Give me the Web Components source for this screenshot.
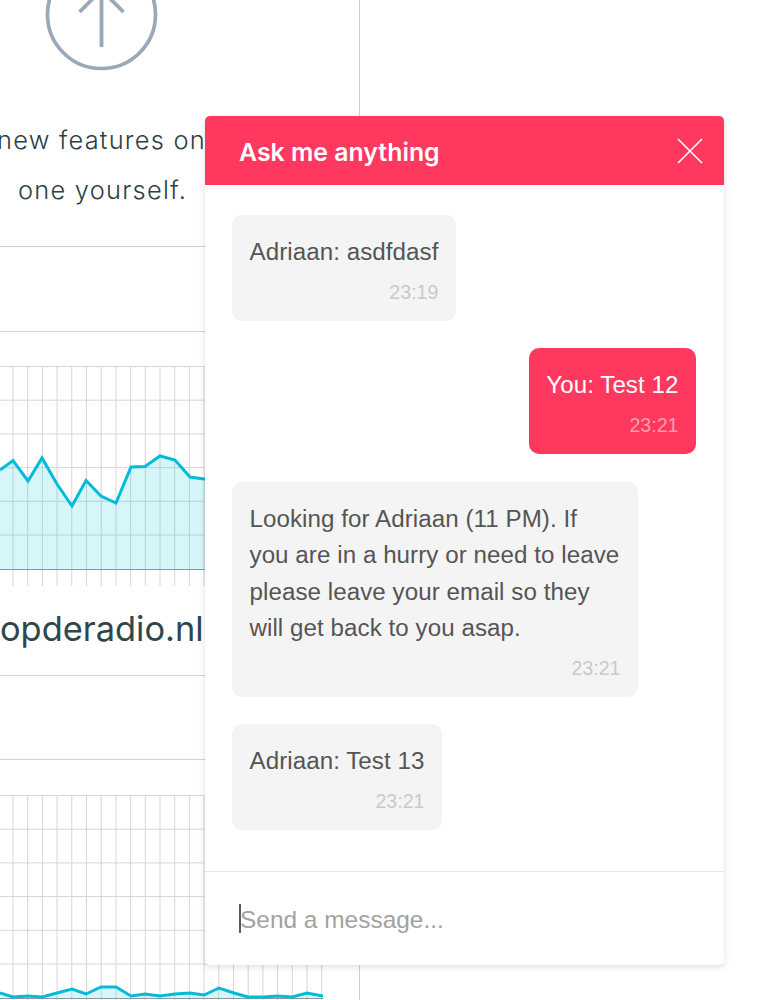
<!DOCTYPE html>
<html lang="en">
<head>
<meta charset="utf-8">
<title>Ask me anything</title>
<style>
html,body{margin:0;padding:0;background:#fff;}
body{width:759px;height:1000px;overflow:hidden;position:relative;}
</style>
</head>
<body>
<page-column>
  <upload-hero>
    <span>new features on</span>
    <span>one yourself.</span>
  </upload-hero>
  <section-rule style="margin-top:31.5px"></section-rule>
  <section-rule style="margin-top:84px"></section-rule>
  <traffic-chart style="margin-top:34px" height="220" base="203" ticks="1"
    points="0,104 13,94.5 28,115 42,92 57,118 72,140 86,114.5 101,130 116,137 131,101 145,100.5 160,90 175,94 190,111 204,113 219,113 234,120 248,118 263,110 278,120 292,115 307,118 323,116"></traffic-chart>
  <site-name>opderadio.nl</site-name>
  <section-rule style="margin-top:24px"></section-rule>
  <section-rule style="margin-top:83px"></section-rule>
  <traffic-chart style="margin-top:35px" height="205" base="203" ticks="0"
    points="0,198 13,202 28,201 42,202 57,198 72,194 86,199 101,192 116,192 131,201 145,199 160,201 175,199 190,198 204,200 219,193 234,198 248,202 263,202 278,201 292,202 307,198 323,201"></traffic-chart>
</page-column>

<chat-panel title-text="Ask me anything" placeholder="Send a message...">
  <chat-bubble time="23:19">Adriaan: asdfdasf</chat-bubble>
  <chat-bubble time="23:21" mine>You: Test 12</chat-bubble>
  <chat-bubble time="23:21">Looking for Adriaan (11 PM). If you are in a hurry or need to leave please leave your email so they will get back to you asap.</chat-bubble>
  <chat-bubble time="23:21">Adriaan: Test 13</chat-bubble>
</chat-panel>

<script>
function shadow(el, html){
  const root = el.attachShadow({mode:'open'});
  root.innerHTML = html;
  return root;
}
customElements.define('page-column', class extends HTMLElement{
  constructor(){super();shadow(this,`<style>
    :host{display:block;width:359px;height:1000px;border-right:1px solid #c5d0da;overflow:hidden;box-sizing:content-box;}
  </style><slot></slot>`);}
});
customElements.define('section-rule', class extends HTMLElement{
  constructor(){super();shadow(this,`<style>
    :host{display:block;height:1px;background:#cbd5dd;}
  </style>`);}
});
customElements.define('upload-hero', class extends HTMLElement{
  constructor(){super();shadow(this,`<style>
    :host{display:block;color:#2b4045;font:300 25.4px/50px "Inter","Lato",sans-serif;letter-spacing:1.25px;}
    svg{display:block;width:204px;height:71px;}
    .lines{margin-top:43.5px;width:205px;overflow:hidden;white-space:nowrap;}
    ::slotted(span){display:block;}
    ::slotted(span:first-child){margin-left:-3px;}
    ::slotted(span:last-child){margin-left:18px;}
  </style>
  <svg viewBox="0 0 204 71" aria-hidden="true">
    <circle cx="101.5" cy="14.5" r="54" fill="none" stroke="#9aa9b8" stroke-width="3.7"/>
    <path d="M101.5 47V-10M79.5 12L101.5-10L123.5 12" fill="none" stroke="#9aa9b8" stroke-width="3.8"/>
  </svg>
  <div class="lines"><slot></slot></div>`);}
});
customElements.define('site-name', class extends HTMLElement{
  constructor(){super();shadow(this,`<style>
    :host{display:block;width:203px;white-space:nowrap;text-align:right;color:#2e474c;font:400 34.4px/44px "Inter","Lato",sans-serif;letter-spacing:0;margin-top:21px;}
  </style><slot></slot>`);}
});
customElements.define('traffic-chart', class extends HTMLElement{
  connectedCallback(){
    if(this.shadowRoot) return;
    const h=+this.getAttribute('height'), base=+this.getAttribute('base');
    const ticks=this.getAttribute('ticks')==='1';
    const pts=this.getAttribute('points');
    let grid='';
    for(let i=0;i<22;i++){
      const x=(13+14.7*i).toFixed(1);
      grid+=`<line x1="${x}" x2="${x}" y1="0" y2="${ticks?220:h}"/>`;
    }
    for(let i=0;i<6;i++){
      const y=(0.5+33.7*i).toFixed(1);
      grid+=`<line x1="0" x2="323" y1="${y}" y2="${y}"/>`;
    }
    const endX=pts.trim().split(' ').pop().split(',')[0];
    shadow(this,`<style>
      :host{display:block;}
      svg{display:block;width:323px;height:${h}px;}
      .grid line{stroke:#d6d6d6;stroke-width:1;}
    </style>
    <svg viewBox="0 0 323 ${h}" aria-hidden="true">
      <g class="grid">${grid}</g>
      <polygon points="0,${base} ${pts} ${endX},${base}" fill="#00c8e1" fill-opacity=".16"/>
      <line x1="0" x2="323" y1="${base}.5" y2="${base}.5" stroke="#8b979f" stroke-width="1"/>
      <polyline points="${pts}" fill="none" stroke="#00bcd8" stroke-width="3"/>
    </svg>`);
  }
});
customElements.define('chat-bubble', class extends HTMLElement{
  connectedCallback(){
    if(this.shadowRoot) return;
    shadow(this,`<style>
      :host{display:block;width:fit-content;max-width:406px;box-sizing:border-box;padding:19px 17.5px 14px;border-radius:10px;background:#f4f4f4;color:#555;font:400 24.15px/36.5px "Liberation Sans",Arial,sans-serif;letter-spacing:.06px;}
      :host([mine]){align-self:flex-end;background:#fe385e;color:#fff;}
      .time{margin-top:6.5px;text-align:right;font-size:19.6px;line-height:30px;color:#c9c9c9;letter-spacing:0;}
      :host([mine]) .time{color:rgba(255,255,255,.5);}
    </style><slot></slot><div class="time">${this.getAttribute('time')}</div>`);
  }
});
customElements.define('chat-panel', class extends HTMLElement{
  connectedCallback(){
    if(this.shadowRoot) return;
    shadow(this,`<style>
      :host{position:absolute;left:205px;top:116px;width:519px;height:849px;display:flex;flex-direction:column;background:#fff;border-radius:5px;box-shadow:0 2px 7px rgba(0,0,0,.13);}
      header{flex:none;height:69px;box-sizing:border-box;padding:3px 21px 0 34px;display:flex;align-items:center;justify-content:space-between;background:#fe385e;border-radius:5px 5px 0 0;color:#fff;font:600 24.85px/1 "Inter","Lato",sans-serif;}
      header svg{display:block;width:26px;height:26px;margin-top:-3px;}
      .list{flex:1;min-height:0;padding:30px 28px 0 27px;display:flex;flex-direction:column;gap:27.3px;}
      footer{flex:none;height:94px;box-sizing:border-box;border-top:1px solid #e6e6e6;padding:0 0 0 34px;display:flex;align-items:center;color:#a2a2a2;font:400 24.45px/30px "Liberation Sans",Arial,sans-serif;}
      .caret{flex:none;width:2px;height:29px;background:#5a5a5a;margin-right:-1px;}
      .ph{margin-top:2px;}
    </style>
    <header><span>${this.getAttribute('title-text')}</span>
      <svg viewBox="0 0 26 26" aria-hidden="true"><path d="M1 1L25 25M25 1L1 25" fill="none" stroke="#fff" stroke-width="1.6"/></svg>
    </header>
    <div class="list"><slot></slot></div>
    <footer><span class="caret"></span><span class="ph">${this.getAttribute('placeholder')}</span></footer>`);
  }
});
</script>
</body>
</html>
